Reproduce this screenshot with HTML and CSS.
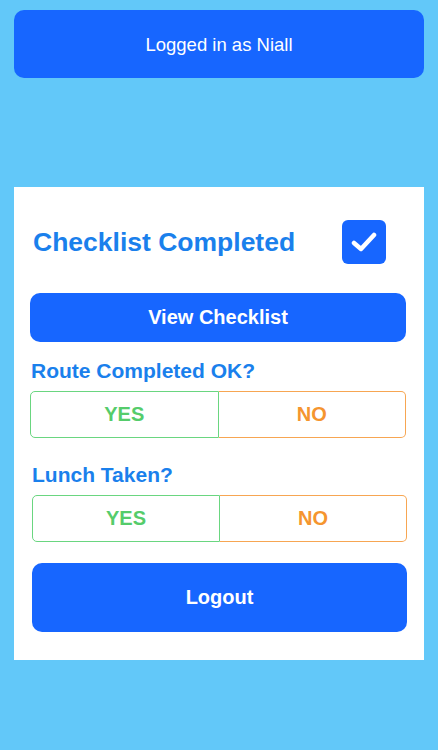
FILE: index.html
```html
<!DOCTYPE html>
<html lang="en">
<head>
    <meta charset="UTF-8">
    <meta name="viewport" content="width=device-width, initial-scale=1.0">
    <title>Driver Status</title>
    <link rel="stylesheet" href="styles.css">
</head>
<body>
    <div class="user-bar">Logged in as Niall</div>

    <div class="panel">
        <div class="checklist-row">
            <h1>Checklist Completed</h1>
            <span class="checkbox">
                <svg width="26" height="20" viewBox="0 0 26 20">
                    <path d="M3 11 L10 17 L23 3" fill="none" stroke="#fff" stroke-width="4.5" stroke-linecap="round" stroke-linejoin="round"/>
                </svg>
            </span>
        </div>

        <button class="btn btn-view">View Checklist</button>

        <h2 class="question">Route Completed OK?</h2>
        <div class="segment">
            <button class="seg-yes">YES</button>
            <button class="seg-no">NO</button>
        </div>

        <h2 class="question q-lunch">Lunch Taken?</h2>
        <div class="segment seg-lunch">
            <button class="seg-yes">YES</button>
            <button class="seg-no">NO</button>
        </div>

        <button class="btn btn-logout">Logout</button>
    </div>
</body>
</html>
```

FILE: styles.css
```css
body {
    font-family: "Liberation Sans", Arial, sans-serif;
    background-color: #62c8f9;
    margin: 0;
    padding: 10px 14px;
    height: 750px;
    box-sizing: border-box;
}

.user-bar {
    height: 68px;
    background-color: #1766ff;
    border-radius: 10px;
    color: #fff;
    font-size: 18.5px;
    display: flex;
    align-items: center;
    justify-content: center;
    padding-top: 2px;
    box-sizing: border-box;
}

.panel {
    margin-top: 109px;
    background-color: #fff;
    padding: 33px 18px 28px 16px;
    display: flex;
    flex-direction: column;
}

.checklist-row {
    display: flex;
    align-items: center;
    justify-content: space-between;
    height: 44px;
    padding: 0 20px 0 3px;
}

.checklist-row h1 {
    margin: 0;
    font-size: 26.5px;
    font-weight: bold;
    color: #1a80ec;
}

.checkbox {
    width: 44px;
    height: 44px;
    border-radius: 6px;
    background-color: #1766ff;
    display: flex;
    align-items: center;
    justify-content: center;
}

.btn {
    border: none;
    border-radius: 10px;
    background-color: #1766ff;
    color: #fff;
    font-family: inherit;
    font-weight: bold;
    cursor: pointer;
}

.btn-view {
    margin-top: 29px;
    height: 49px;
    font-size: 20px;
}

.question {
    margin: 16px 0 0 1px;
    font-size: 21px;
    font-weight: bold;
    color: #1a80ec;
    line-height: 26px;
}

.q-lunch {
    margin-top: 24px;
    margin-left: 2px;
}

.segment {
    display: flex;
    margin-top: 7px;
    height: 47px;
}

.seg-lunch {
    margin-left: 2px;
    margin-right: -1px;
}

.segment button {
    flex: 1;
    background-color: #fff;
    font-family: inherit;
    font-size: 20px;
    font-weight: bold;
    cursor: pointer;
}

.seg-yes {
    border: 1.5px solid #6ad680;
    border-radius: 5px 0 0 5px;
    color: #55cc6b;
}

.seg-no {
    border: 1.5px solid #f7a652;
    border-left: none;
    border-radius: 0 5px 5px 0;
    color: #f5952f;
}

.btn-logout {
    margin: 21px -1px 0 2px;
    height: 69px;
    font-size: 20px;
}
```
